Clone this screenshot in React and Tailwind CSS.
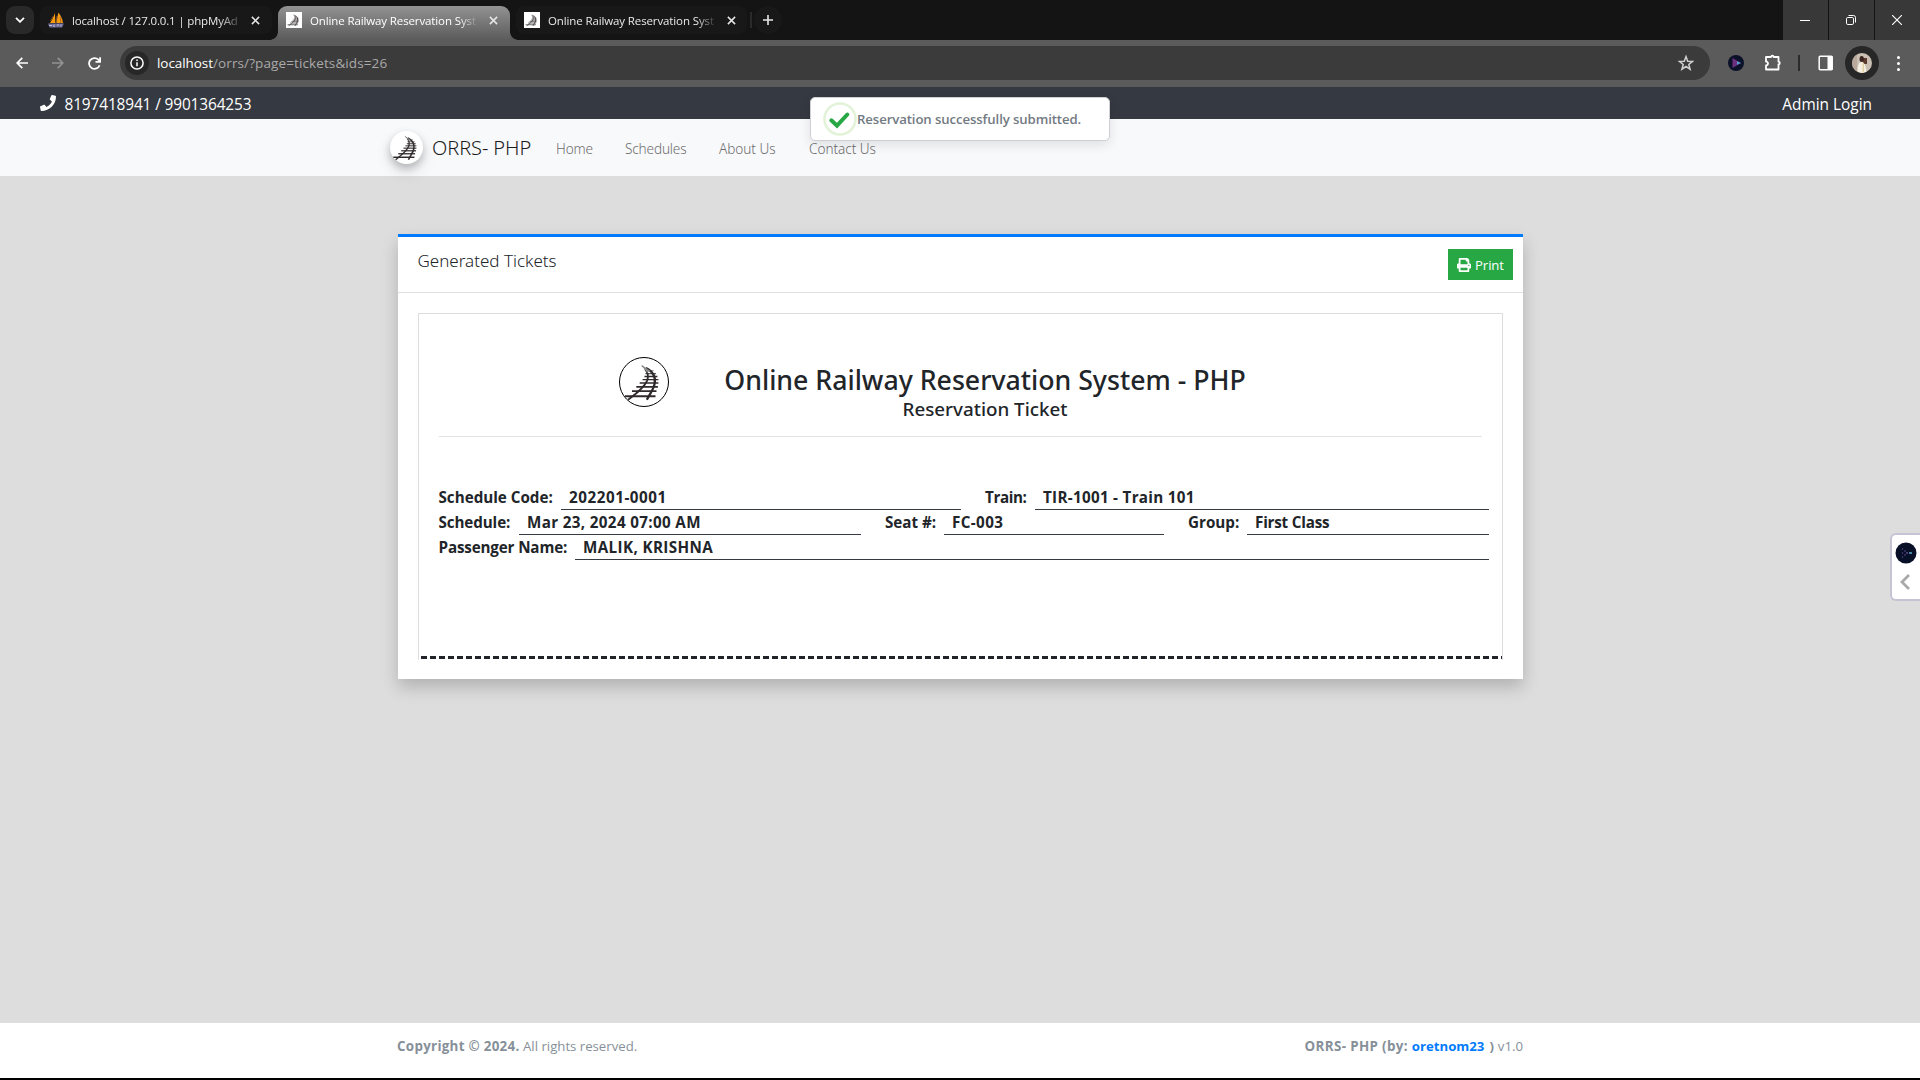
import { FaPhone, FaPrint } from "react-icons/fa";

function Rails({ className }) {
  return (
    <svg viewBox="0 0 50 50" className={className} fill="none" stroke="#2f292b">
      <g>
        <path d="M5 39.800H37" strokeWidth="2.200" />
        <path d="M12.500 34.500H38" strokeWidth="2" />
        <path d="M17 30H39.500" strokeWidth="1.900" />
        <path d="M20.500 26H40" strokeWidth="1.700" />
        <path d="M23.500 22.500H40" strokeWidth="1.500" />
        <path d="M25.500 19.300H39" strokeWidth="1.400" />
        <path d="M26.500 16.300H37.500" strokeWidth="1.200" stroke="#555" />
        <path d="M26.500 13.300H35" strokeWidth="1.200" stroke="#777" />
      </g>
      <path d="M26 11.500C29.500 15 30 19 28 24C25 31 17 37 8.500 43.500" strokeWidth="1.900" />
      <path d="M27 10.500C34 14 37.500 20 36 27C35 33 31 37 28 43.500" strokeWidth="2.400" />
      <path d="M22.500 8L31 14M24.500 9.500L29 15" strokeWidth="1.500" stroke="#8a8a8a" />
    </svg>
  );
}

function Close({ className = "" }) {
  return (
    <svg viewBox="0 0 10 10" className={`h-[9px] w-[9px] shrink-0 ${className}`} stroke="#e6e6e6" strokeWidth="1.700">
      <path d="M1 1l8 8M9 1l-8 8" />
    </svg>
  );
}

function Favicon() {
  return (
    <span className="flex h-4 w-4 shrink-0 items-center justify-center bg-white">
      <Rails className="h-4 w-4" />
    </span>
  );
}

function TabStrip() {
  return (
    <div className="flex h-10 bg-[#141414] text-[11.5px] text-[#e8e8e8]">
      <button className="mt-1.5 ml-1.5 flex h-7 w-7 items-center justify-center rounded-[9px] bg-[#292929]">
        <svg viewBox="0 0 10 6" className="h-[6px] w-[10px]" fill="none" stroke="#fff" strokeWidth="1.800">
          <path d="M1 .8l4 4 4-4" />
        </svg>
      </button>
      <div className="mt-1.5 ml-1.5 flex h-7 w-[232px] items-center rounded-lg bg-[#181818] pl-2">
        <svg viewBox="0 0 16 16" className="h-4 w-4 shrink-0">
          <path d="M6.500 1C6 5 4 8 2 11h5.500C7 8 7.500 4 6.500 1z" fill="#f89c0e" />
          <path d="M10.500 .5C9.500 4 8.500 8 8.500 11H15C14.500 7 12.500 3 10.500 .5z" fill="#f89c0e" />
          <path d="M5.500 4L2.500 9M9 4l-.5 7M12 5l1 6" stroke="#a0602a" strokeWidth=".9" />
          <path d="M0 11.500h16l-2 4H1.500z" fill="#6c6b96" />
          <path d="M1 13.500h3M6 12.500v2.500M9 13h2M13 12.500v2" stroke="#c9c7da" strokeWidth=".9" />
        </svg>
        <span className="mt-px ml-[8px] w-[167px] whitespace-nowrap tracking-[-0.16px] [mask-image:linear-gradient(to_right,#000_88%,transparent_103%)]">
          localhost / 127.0.0.1 | phpMyAd
        </span>
        <Close className="ml-[12px]" />
      </div>
      <div className="relative mt-1.5 ml-[6px] flex h-[34px] w-[232px] rounded-t-[9px] bg-linear-to-b from-[#939393] to-[#5b5b5b] pl-2 text-white">
        <span className="absolute bottom-0 -left-2 h-2 w-2 bg-[radial-gradient(circle_at_0_0,#141414_7.5px,#5b5b5b_8px)]" />
        <span className="absolute -right-2 bottom-0 h-2 w-2 bg-[radial-gradient(circle_at_100%_0,#141414_7.5px,#5b5b5b_8px)]" />
        <div className="flex h-7 items-center">
          <Favicon />
          <span className="mt-px ml-2 w-[169px] whitespace-nowrap tracking-[-0.12px] [mask-image:linear-gradient(to_right,#000_88%,transparent)]">
            Online Railway Reservation Syst
          </span>
          <Close className="ml-[10px]" />
        </div>
      </div>
      <div className="mt-1.5 ml-[6px] flex h-7 w-[231px] items-center rounded-lg bg-[#181818] pl-2">
        <Favicon />
        <span className="mt-px ml-2 w-[169px] whitespace-nowrap tracking-[-0.12px] [mask-image:linear-gradient(to_right,#000_88%,transparent)]">
          Online Railway Reservation Syst
        </span>
        <Close className="ml-[10px]" />
      </div>
      <span className="mt-3 ml-[3px] h-4 w-0.5 bg-[#2a2a2a]" />
      <button className="mt-1.5 ml-[2px] flex h-7 w-7 items-center justify-center rounded-full bg-[#181818]">
        <svg viewBox="0 0 10 10" className="h-[10px] w-[10px]" stroke="#e6e6e6" strokeWidth="1.600">
          <path d="M5 0v10M0 5h10" />
        </svg>
      </button>
      <div className="ml-auto flex gap-px">
        <span className="flex w-[45px] items-center justify-center bg-[#383838] pr-px">
          <span className="h-px w-[10px] bg-white" />
        </span>
        <span className="flex w-[45px] items-center justify-center bg-[#383838] pr-px">
          <svg viewBox="0 0 10 10" className="h-[10px] w-[10px]" fill="none" stroke="#fff">
            <rect x=".5" y="2.500" width="7" height="7" rx="1.300" />
            <path d="M2.500 .5H7.500a2 2 0 0 1 2 2V7.500" />
          </svg>
        </span>
        <span className="flex w-[45px] items-center justify-center bg-[#383838] pr-px">
          <svg viewBox="0 0 10 10" className="h-[10px] w-[10px]" stroke="#fff" strokeWidth="1.100">
            <path d="M0 0l10 10M10 0L0 10" />
          </svg>
        </span>
      </div>
    </div>
  );
}

function Toolbar() {
  return (
    <div className="flex h-[47px] items-center bg-[#5b5b5b] pb-[1px] text-[13.5px]">
      <svg viewBox="0 0 12 12" className="ml-4 h-3 w-3" fill="none" stroke="#fff" strokeWidth="1.700">
        <path d="M12 6H1.200M6.300 .8L1.200 6l5.100 5.200" />
      </svg>
      <svg viewBox="0 0 12 12" className="ml-6 h-3 w-3" fill="none" stroke="#929292" strokeWidth="1.700">
        <path d="M0 6h10.800M5.700 .8L10.800 6l-5.100 5.200" />
      </svg>
      <svg viewBox="0 0 13 13" className="ml-6 h-[13px] w-[13px]" fill="none" stroke="#fff" strokeWidth="1.800">
        <path d="M11.600 8.200a5.400 5.400 0 1 1-1.200-5.500l1.300 1.400" />
        <path d="M12.100 .3v4.600H7.500" />
      </svg>
      <div className="ml-[19px] flex h-[34px] w-[1590px] items-center rounded-full bg-[#3b3b3b] pr-4 pl-[5px]">
        <span className="flex h-6 w-6 items-center justify-center rounded-full bg-[#272727]">
          <svg viewBox="0 0 14 14" className="h-[14px] w-[14px]" fill="none" stroke="#fff" strokeWidth="1.500">
            <circle cx="7" cy="7" r="6.100" />
            <path d="M7 6.200v4M7 3.600v1.400" />
          </svg>
        </span>
        <span className="ml-2 w-[56px] tracking-[-0.07px] whitespace-nowrap text-white">localhost</span>
        <span className="tracking-[0.11px] text-[#aaaaaa]">/orrs/?page=tickets&amp;ids=26</span>
        <svg viewBox="0 0 16 16" className="ml-auto h-4 w-4" fill="none" stroke="#d0d0d0" strokeWidth="1.500">
          <path d="M8 1.600l1.700 4.600 4.900 .2-3.800 3.100 1.300 4.700L8 11.500l-4.100 2.700 1.300-4.700L1.400 6.400l4.900-.2z" />
        </svg>
      </div>
      <svg viewBox="0 0 16 16" className="ml-[18px] h-4 w-4">
        <circle cx="8" cy="8" r="8" fill="#0a1128" />
        <path d="M4.500 3l8.500 5-8.500 5z" fill="#6d2f80" />
        <path d="M9 6.300l4 1.700-4 1.700z" fill="#4fa0cc" />
      </svg>
      <svg viewBox="0 0 18 18" className="ml-[20px] h-[18px] w-[18px]" fill="none" stroke="#fff" strokeWidth="1.800" strokeLinejoin="round">
        <path d="M2 3h5a1.300 1.300 0 0 1 2.600 0H14.500v4.700a1.300 1.300 0 0 1 0 2.600V15.500H2v-4a2 2 0 0 0 0-4z" />
      </svg>
      <span className="ml-[16px] h-4 w-0.5 bg-[#2b2b2b]" />
      <svg viewBox="0 0 16 16" className="ml-[18px] h-4 w-4" fill="none" stroke="#fff" strokeWidth="1.500">
        <rect x="1.200" y="1.200" width="13" height="13.500" rx="1" />
        <path d="M9.500 1h5v14h-5z" fill="#fff" stroke="none" />
      </svg>
      <span className="ml-[11px] flex h-[34px] w-[34px] items-center justify-center rounded-full bg-[#272727]">
        <svg viewBox="0 0 20 20" className="h-5 w-5 rounded-full">
          <rect width="20" height="20" fill="#cbbfb4" />
          <path d="M0 0h5v20H0z" fill="#b9a99c" />
          <path d="M11 5h4v6h-4z" fill="#5b3a2e" />
          <ellipse cx="9.700" cy="6" rx="2.200" ry="3" fill="#3a2520" />
          <path d="M5.500 20c0-8 1.500-11 4-11s4.500 3 5 11z" fill="#f5efe2" />
          <path d="M10.500 10h1.500V20h-1.500z" fill="#e4d3a4" />
        </svg>
      </span>
      <span className="ml-[18px] flex w-[3px] flex-col gap-[3px]">
        <i className="h-[3px] w-[3px] rounded-full bg-white" />
        <i className="h-[3px] w-[3px] rounded-full bg-white" />
        <i className="h-[3px] w-[3px] rounded-full bg-white" />
      </span>
    </div>
  );
}

function SiteHeader() {
  return (
    <>
      <div className="flex h-8 items-center bg-[#353941] pr-[48px] pl-[40px] text-[15.4px] text-white">
        <FaPhone className="h-4 w-4" />
        <span className="mt-[3px] ml-[8.5px] tracking-[-0.12px]">8197418941 / 9901364253</span>
        <span className="mt-[3px] ml-auto">Admin Login</span>
      </div>
      <nav className="flex h-[57px] items-center bg-[#f8f9fb] pl-[390px] font-['Noto_Sans',sans-serif] font-light">
        <span className="mb-px flex h-[33px] w-[33px] items-center justify-center rounded-full bg-white shadow-[0_8px_16px_rgba(0,0,0,0.1),0_4px_8px_rgba(0,0,0,0.22)]">
          <Rails className="h-[33px] w-[33px]" />
        </span>
        <span className="mt-px ml-[9px] w-[124px] text-[20px] tracking-[-0.1px] text-[#1c1c1c]">ORRS- PHP</span>
        <div className="mt-[4px] flex text-[13.6px] tracking-[-0.04px] whitespace-nowrap text-[#6c6c6c]">
          <span className="w-[69px] tracking-[-0.2px]">Home</span>
          <span className="w-[94px] tracking-[-0.15px]">Schedules</span>
          <span className="w-[90px]">About Us</span>
          <span>Contact Us</span>
        </div>
      </nav>
    </>
  );
}

function Toast() {
  return (
    <div className="absolute top-[97px] left-[810px] flex h-11 w-[300px] items-center rounded-[5px] border border-[#cfcfd1] bg-white pl-3 shadow-[0_4px_12px_rgba(0,0,0,0.1)]">
      <svg viewBox="0 0 34 34" className="h-[34px] w-[34px]" fill="none">
        <circle cx="17" cy="17" r="15.500" stroke="#e3f3d9" strokeWidth="2.600" />
        <path d="M8.300 18.300L14 23.700 24.300 12.500" stroke="#28a745" strokeWidth="4" strokeLinecap="round" />
      </svg>
      <span className="mt-[2px] text-[13.2px] font-semibold tracking-[-0.1px] text-[#727a82]">Reservation successfully submitted.</span>
    </div>
  );
}

function Line({ className = "", children }) {
  return <div className={`h-[25px] border-b border-[#343a40] pl-2 leading-[25px] ${className}`}>{children}</div>;
}

function Ticket() {
  return (
    <div className="mx-5 mt-5 h-[347px] border border-b-0 border-[#dddddd]">
      <div className="mx-5 flex h-[123px] border-b border-[#e3e3e3]">
        <div className="mt-[43px] ml-[180px] h-[50px] w-[50px] overflow-hidden rounded-full border border-black">
          <Rails className="h-12 w-12" />
        </div>
        <div className="mt-[49px] ml-[26px] w-[580px] text-center font-['Noto_Sans',sans-serif] font-medium whitespace-nowrap">
          <div className="text-[26.7px] leading-[34px]">Online Railway Reservation System - PHP</div>
          <div className="text-[18.8px] leading-6">Reservation Ticket</div>
        </div>
      </div>
      <div className="mt-[48px] ml-[19.5px] w-[1050.5px] text-[15.2px] leading-[25px] font-bold whitespace-nowrap">
        <div className="flex h-[25px]">
          <span className="w-[122.5px]">Schedule Code:</span>
          <Line className="w-[400px] tracking-[0.55px]">202201-0001</Line>
          <span className="ml-[24px] w-[50px] tracking-[-0.4px]">Train:</span>
          <Line className="grow tracking-[0.3px]">TIR-1001 - Train 101</Line>
        </div>
        <div className="flex h-[25px]">
          <span className="w-[80.5px] tracking-[-0.1px]">Schedule:</span>
          <Line className="w-[342px] tracking-[0.35px]">Mar 23, 2024 07:00 AM</Line>
          <span className="ml-[24px] w-[59px] tracking-[0px]">Seat #:</span>
          <Line className="w-[220px] tracking-[0.4px]">FC-003</Line>
          <span className="ml-[24px] w-[59px]">Group:</span>
          <Line className="grow tracking-[-0.2px]">First Class</Line>
        </div>
        <div className="flex h-[25px]">
          <span className="w-[136.5px] tracking-[-0.15px]">Passenger Name:</span>
          <Line className="grow tracking-[0.38px]">MALIK, KRISHNA</Line>
        </div>
      </div>
      <div className="mt-[96px] ml-[2px] h-[3px] bg-[repeating-linear-gradient(to_right,#212529_0_6px,transparent_6px_9px)]" />
    </div>
  );
}

export default function App() {
  return (
    <div className="relative flex h-[1080px] w-[1920px] flex-col overflow-hidden bg-[#dddddd] font-['Open_Sans',sans-serif] text-[#212529]">
      <TabStrip />
      <Toolbar />
      <SiteHeader />
      <main className="grow">
        <section className="mt-[58px] ml-[398px] h-[445px] w-[1125px] border-t-[3px] border-[#007bff] bg-white shadow-[0_8px_16px_rgba(0,0,0,0.2)]">
          <header className="flex h-[56px] justify-between border-b border-[#dfdfdf] pr-[10px] pl-[19.5px]">
            <h3 className="mt-[12px] font-['Noto_Sans',sans-serif] text-[17px] leading-6 font-light">Generated Tickets</h3>
            <button className="mt-3 flex h-[31px] w-[65px] items-center justify-center gap-1 bg-[#28a745] text-[13.2px] tracking-[-0.1px] text-white">
              <FaPrint className="h-[14px] w-[14px]" />
              <span className="mt-[2px]">Print</span>
            </button>
          </header>
          <Ticket />
        </section>
      </main>
      <footer className="flex h-[57px] justify-between border-b-2 border-black bg-white pt-[13px] pr-[397px] pl-[397px] text-[13.2px] leading-5 text-[#869099]">
        <div>
          <b className="text-[13.4px] tracking-[0.28px]">Copyright © 2024.</b> All rights reserved.
        </div>
        <div className="flex">
          <b className="text-[13.4px] tracking-[0.34px]">ORRS- PHP (by:</b>
          <b className="ml-1 text-[#007bff]">oretnom23</b>
          <b className="mr-1 ml-[5px]">)</b>
          <span>v1.0</span>
        </div>
      </footer>
      <Toast />
      <div className="absolute top-[533px] right-0 flex h-[68px] w-[30px] flex-col items-center rounded-l-md border-2 border-r-0 border-[#c5c4d4] bg-white pt-[7px]">
        <svg viewBox="0 0 22 22" className="h-[22px] w-[22px]">
          <circle cx="11" cy="11" r="10.500" fill="#081028" />
          <g fill="#5b4a8c">
            <circle cx="7.500" cy="7" r=".7" />
            <circle cx="7.500" cy="11" r=".7" />
            <circle cx="7.500" cy="15" r=".7" />
            <circle cx="10" cy="9" r=".8" />
            <circle cx="10" cy="13" r=".8" />
            <circle cx="12" cy="11" r="1" />
          </g>
          <path d="M14 10.300h3v1.400h-3z" fill="#62b8d6" />
        </svg>
        <svg viewBox="0 0 10 16" className="mt-[10px] mr-[3px] h-4 w-[10px]" fill="none" stroke="#a9a9a9" strokeWidth="2.800">
          <path d="M9 1L2 8l7 7" />
        </svg>
      </div>
    </div>
  );
}
